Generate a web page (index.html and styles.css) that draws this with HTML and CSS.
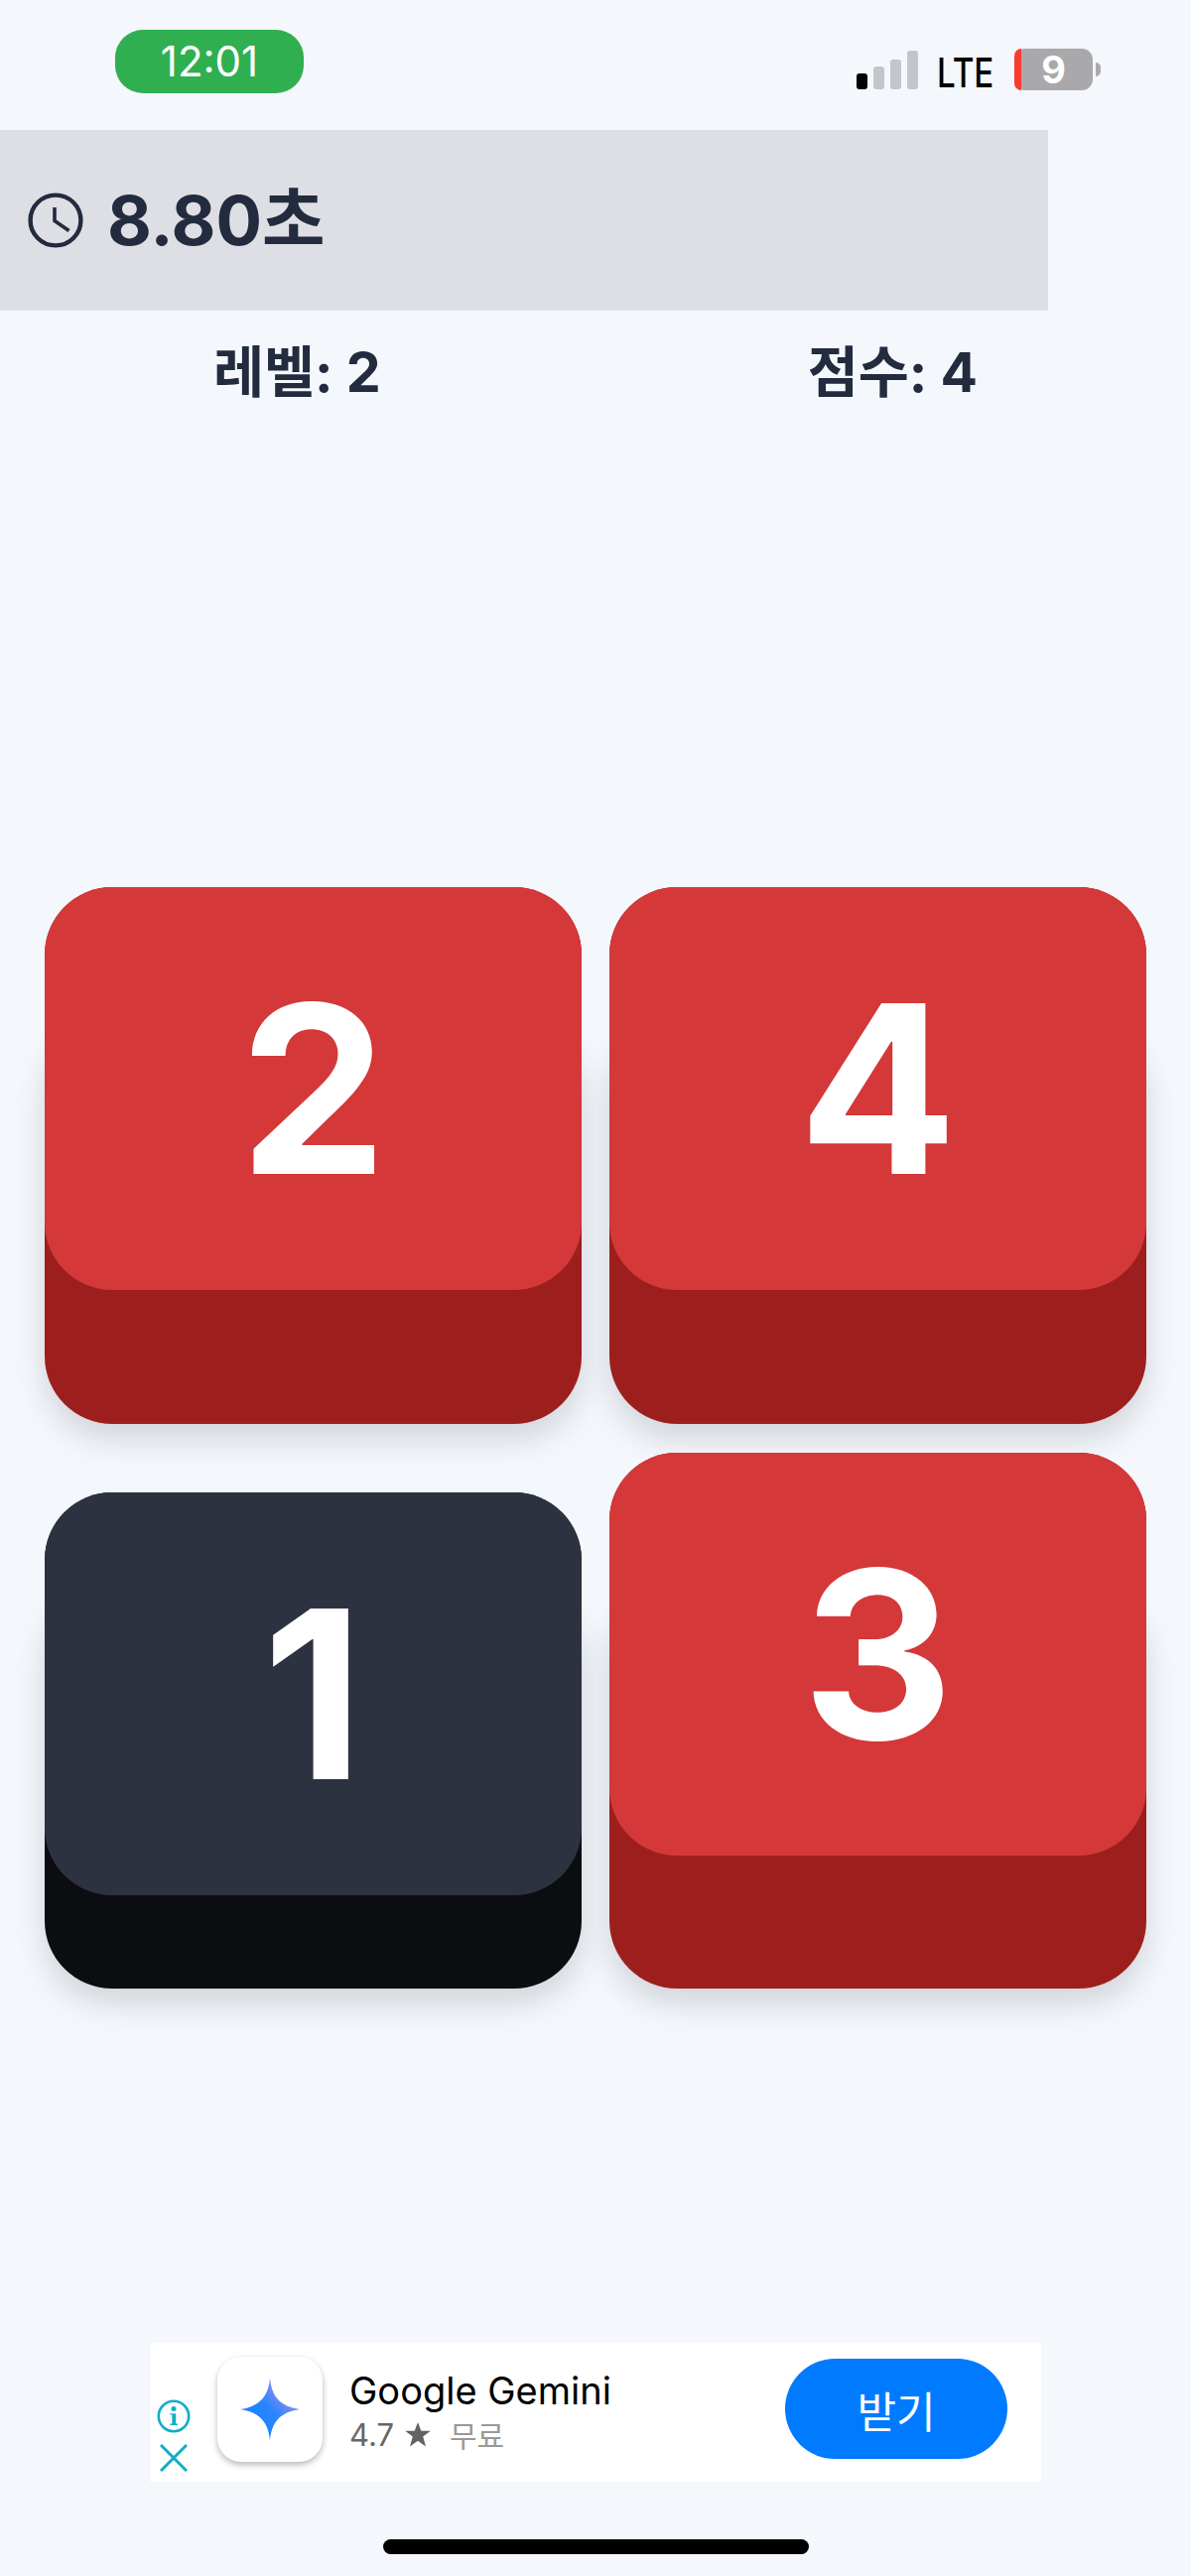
FILE: index.html
```html
<!DOCTYPE html>
<html lang="ko">
<head>
<meta charset="utf-8">
<title>게임</title>
<link rel="stylesheet" href="styles.css">
</head>
<body>
<div class="page">
  <header class="status">
    <div class="pill">12:01</div>
    <div class="status-right">
      <div class="signal">
        <span class="bar bar-1"></span>
        <span class="bar bar-2"></span>
        <span class="bar bar-3"></span>
        <span class="bar bar-4"></span>
      </div>
      <span class="lte"><span class="lte-text">LTE</span></span>
      <div class="battery-wrap">
        <div class="battery"><span class="battery-low"></span><span class="battery-num">9</span></div>
        <span class="battery-cap"></span>
      </div>
    </div>
  </header>

  <section class="timer">
    <svg class="clock" viewBox="0 0 56 56" fill="none" stroke="#232b3e" stroke-width="4.4">
      <circle cx="28" cy="28" r="25.4"/>
      <path d="M27 15V28.5L41.5 38.5" stroke-width="3.6"/>
    </svg>
    <span class="timer-text">8.80초</span>
  </section>

  <section class="stats">
    <span class="stat">레벨: 2</span>
    <span class="stat">점수: 4</span>
  </section>

  <main class="board">
    <div class="key"><div class="base red"><span class="face">2</span></div></div>
    <div class="key"><div class="base red"><span class="face">4</span></div></div>
    <div class="key"><div class="base dark pressed"><span class="face">1</span></div></div>
    <div class="key"><div class="base red"><span class="face">3</span></div></div>
  </main>

  <aside class="ad">
    <div class="ad-controls">
      <svg class="ad-info" viewBox="0 0 34 34" fill="none">
        <circle cx="17" cy="17" r="15.2" stroke="#12aec6" stroke-width="2.6"/>
        <circle cx="17" cy="9.6" r="2.5" fill="#12aec6"/>
        <path d="M13.4 14.2H19.2V24.6H21V26H13.4V24.6H15.4V15.6H13.4Z" fill="#12aec6"/>
      </svg>
      <svg class="ad-close" viewBox="0 0 28 28" fill="none" stroke="#12aec6" stroke-width="3">
        <path d="M1 1L27 27M27 1L1 27"/>
      </svg>
    </div>
    <div class="ad-icon">
      <svg class="gem" viewBox="0 0 60 64">
        <defs>
          <linearGradient id="gemgrad" x1="0.15" y1="0.85" x2="0.85" y2="0.15">
            <stop offset="0" stop-color="#1283ff"/>
            <stop offset="0.5" stop-color="#2a85ff"/>
            <stop offset="1" stop-color="#b58dea"/>
          </linearGradient>
        </defs>
        <path d="M30 0C31.5 19 40 29 60 32C40 35 31.5 45 30 64C28.5 45 20 35 0 32C20 29 28.5 19 30 0Z" fill="url(#gemgrad)"/>
      </svg>
    </div>
    <div class="ad-text">
      <div class="ad-title">Google Gemini</div>
      <div class="ad-meta">
        <span class="ad-rating">4.7</span>
        <svg class="ad-star" viewBox="0 0 26 25"><path d="M13 0L16.3 8.8H25.8L18.2 14.6L21 24.6L13 18.8L5 24.6L7.8 14.6L.2 8.8H9.7Z" fill="#636363"/></svg>
        <span class="ad-price">무료</span>
      </div>
    </div>
    <button class="ad-btn">받기</button>
  </aside>

  <div class="home-bar"></div>
</div>
</body>
</html>
```

FILE: styles.css
```css
* { box-sizing: border-box; }

html, body {
  margin: 0;
  padding: 0;
}

body {
  background: #f4f7fb;
  font-family: Inter, "Noto Sans CJK KR", sans-serif;
  color: #232b3e;
}

.page {
  width: 1200px;
  height: 2596px;
  overflow: hidden;
  display: flex;
  flex-direction: column;
}

/* status bar */
.status {
  height: 131px;
  padding: 30px 91px 0 116px;
  display: flex;
  justify-content: space-between;
  align-items: flex-start;
}

.pill {
  width: 190px;
  height: 64px;
  border-radius: 28px;
  background: #30af50;
  color: #fff;
  font-family: Inter, sans-serif;
  font-size: 42px;
  line-height: 64px;
  text-align: center;
}

.status-right {
  display: flex;
  align-items: flex-start;
  padding-top: 19px;
}

.signal {
  display: flex;
  align-items: flex-end;
  gap: 6px;
  height: 39px;
  margin-top: 2px;
  margin-right: 19px;
}

.bar {
  width: 11px;
  border-radius: 3px;
  background: #c2c5ca;
}

.bar-1 { height: 16px; background: #000; }
.bar-2 { height: 23px; }
.bar-3 { height: 30px; }
.bar-4 { height: 39px; }

.lte {
  display: block;
  width: 58px;
  margin-top: 4px;
  margin-right: 20px;
}

.lte-text {
  display: inline-block;
  font-family: Inter, sans-serif;
  font-weight: 500;
  font-size: 41px;
  line-height: 40px;
  color: #000;
  transform: scaleX(0.81);
  transform-origin: left center;
}

.battery-wrap {
  display: flex;
  align-items: center;
  gap: 3px;
}

.battery {
  position: relative;
  width: 79px;
  height: 42px;
  border-radius: 11px;
  background: #a9a9ab;
  text-align: center;
}

.battery-low {
  position: absolute;
  left: 0;
  top: 0;
  bottom: 0;
  width: 7px;
  border-radius: 11px 0 0 11px;
  background: #fb3b30;
}

.battery-num {
  font-family: Inter, sans-serif;
  font-weight: 700;
  font-size: 38px;
  line-height: 42px;
  color: #fff;
}

.battery-cap {
  width: 5px;
  height: 14px;
  border-radius: 0 7px 7px 0;
  background: #a9a9ab;
}

/* timer */
.timer {
  width: 1056px;
  height: 182px;
  background: #dedfe5;
  padding-left: 28px;
  display: flex;
  align-items: center;
  gap: 24px;
}

.clock {
  width: 56px;
  height: 56px;
  flex: none;
}

.timer-text {
  font-size: 69px;
  font-weight: 700;
  line-height: 1;
}

/* level / score */
.stats {
  height: 124px;
  display: flex;
  justify-content: space-around;
  align-items: center;
  font-size: 55.5px;
  font-weight: 700;
}

.stat { line-height: 1; }

/* board */
.board {
  margin-top: 457px;
  padding: 0 45px;
  display: grid;
  grid-template-columns: 541px 541px;
  grid-template-rows: 541px 540px;
  column-gap: 28px;
  row-gap: 29px;
}

.key {
  display: flex;
  align-items: flex-end;
  position: relative;
  isolation: isolate;
}

.key::before {
  content: "";
  position: absolute;
  z-index: -1;
  left: 0;
  right: 0;
  top: 130px;
  bottom: 0;
  border-radius: 68px;
  box-shadow: 0 15px 30px 0 rgba(40, 50, 60, 0.17);
}

.base {
  width: 100%;
  height: 100%;
  border-radius: 68px;
}

.base.pressed { height: 500px; }

.face {
  display: flex;
  align-items: center;
  justify-content: center;
  height: 406px;
  border-radius: 68px;
  color: #fff;
  font-family: Inter, sans-serif;
  font-weight: 700;
  font-size: 236px;
  line-height: 1;
}

.red { background: #9c1f1e; }
.red .face { background: #d43839; }
.dark { background: #0c0d11; }
.dark .face { background: #2d3240; }

/* ad banner */
.ad {
  margin: 357px 0 0 151px;
  width: 898px;
  height: 140px;
  background: #fff;
  display: flex;
  align-items: flex-start;
  color: #000;
}

.ad-controls {
  width: 48px;
  margin-right: 20px;
  padding-top: 57px;
  display: flex;
  flex-direction: column;
  align-items: center;
  gap: 11px;
}

.ad-info {
  width: 34px;
  height: 34px;
  display: block;
}

.ad-close {
  width: 28px;
  height: 28px;
  display: block;
}

.ad-icon {
  width: 106px;
  height: 106px;
  margin-top: 14px;
  border-radius: 24px;
  background: #fff;
  box-shadow: 0 3px 6px rgba(0, 0, 0, 0.28);
  display: flex;
  align-items: center;
  justify-content: center;
}

.gem {
  width: 60px;
  height: 64px;
}

.ad-text {
  margin-left: 27px;
  padding-top: 26px;
  width: 439px;
}

.ad-title {
  font-size: 38px;
  line-height: 44px;
  font-weight: 400;
}

.ad-meta {
  display: flex;
  align-items: center;
  margin-top: 3px;
  height: 38px;
}

.ad-rating {
  font-size: 31px;
  color: #666;
  width: 56px;
}

.ad-star {
  width: 26px;
  height: 25px;
  margin-right: 19px;
}

.ad-price {
  font-size: 30px;
  color: #999;
}

.ad-btn {
  width: 224px;
  height: 101px;
  margin-top: 16px;
  padding: 0;
  border: 0;
  border-radius: 51px;
  background: #007bff;
  color: #fff;
  font-family: Inter, "Noto Sans CJK KR", sans-serif;
  font-size: 43px;
  font-weight: 400;
}

.home-bar {
  width: 429px;
  height: 15px;
  margin: 58px 0 0 386px;
  border-radius: 8px;
  background: #000;
}
```
